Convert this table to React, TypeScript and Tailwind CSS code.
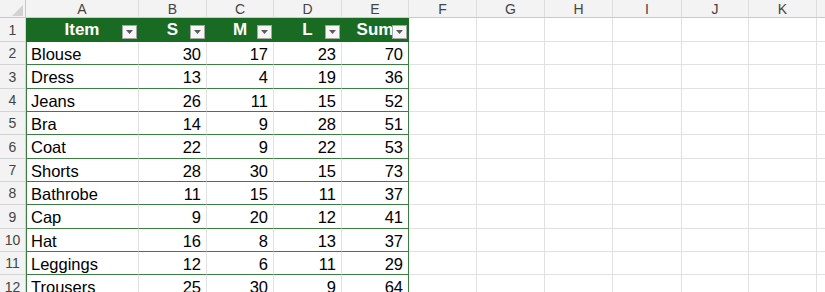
import React from 'react';

interface Column {
  letter: string;
  width: string;
}

const columns: Column[] = [
  { letter: 'A', width: 'w-[113px]' },
  { letter: 'B', width: 'w-[68px]' },
  { letter: 'C', width: 'w-[67px]' },
  { letter: 'D', width: 'w-[68px]' },
  { letter: 'E', width: 'w-[67px]' },
  { letter: 'F', width: 'w-[68px]' },
  { letter: 'G', width: 'w-[68px]' },
  { letter: 'H', width: 'w-[68px]' },
  { letter: 'I', width: 'w-[69px]' },
  { letter: 'J', width: 'w-[67px]' },
  { letter: 'K', width: 'w-[68px]' },
  { letter: 'L', width: 'w-[68px]' },
];

// heights of rows 2..12 (row 1 is the table header)
const rowHeights = [
  'h-[23px]', 'h-[24px]', 'h-[23px]', 'h-[23px]', 'h-[24px]', 'h-[23px]',
  'h-[23px]', 'h-[24px]', 'h-[23px]', 'h-[23px]', 'h-[24px]',
];

const headers = ['Item', 'S', 'M', 'L', 'Sum'];

const data: [string, number, number, number, number][] = [
  ['Blouse', 30, 17, 23, 70],
  ['Dress', 13, 4, 19, 36],
  ['Jeans', 26, 11, 15, 52],
  ['Bra', 14, 9, 28, 51],
  ['Coat', 22, 9, 22, 53],
  ['Shorts', 28, 30, 15, 73],
  ['Bathrobe', 11, 15, 11, 37],
  ['Cap', 9, 20, 12, 41],
  ['Hat', 16, 8, 13, 37],
  ['Leggings', 12, 6, 11, 29],
  ['Trousers', 25, 30, 9, 64],
];

function FilterButton() {
  return (
    <span className="absolute right-[1px] bottom-[2px] flex h-[14px] w-[15px] items-center justify-center border border-[#a6a6a6] bg-[#f6f6f6]">
      <svg width="7" height="4" viewBox="0 0 7 4">
        <path d="M0 0 H7 L3.5 4 Z" fill="#5a5a5a" />
      </svg>
    </span>
  );
}

function RowHeader({ n, height }: { n: number; height: string }) {
  return (
    <div className={`${height} w-[26px] shrink-0 flex items-center justify-center pt-[1px] border-r border-b border-[#d4d4d4] bg-[#f3f3f3] text-[14px] text-[#444]`}>
      {n}
    </div>
  );
}

export default function App() {
  return (
    <div className="h-[292px] w-[825px] overflow-hidden bg-white font-['Liberation_Sans',Arial,sans-serif]">
      {/* column letters */}
      <div className="flex h-[18px]">
        <div className="relative w-[26px] shrink-0 border-r border-b border-[#c8c8c8] bg-[#f3f3f3]">
          <svg className="absolute left-[12px] top-[5px]" width="11" height="11" viewBox="0 0 11 11">
            <path d="M11 0 V11 H0 Z" fill="#d2d2d2" />
          </svg>
        </div>
        {columns.map((c) => (
          <div
            key={c.letter}
            className={`${c.width} shrink-0 flex items-center justify-center pt-[1px] border-r border-b border-r-[#dcdcdc] border-b-[#c8c8c8] bg-[#f3f3f3] text-[14px] text-[#444]`}
          >
            {c.letter}
          </div>
        ))}
      </div>

      {/* row 1: table header */}
      <div className="flex">
        <RowHeader n={1} height="h-[24px]" />
        {columns.map((c, i) =>
          i < 5 ? (
            <div
              key={c.letter}
              className={`${c.width} relative shrink-0 flex h-[24px] items-center justify-center pt-[1px] border-r border-b border-[#196b24] bg-[#196b24] text-[17px] font-bold text-white`}
            >
              {headers[i]}
              <FilterButton />
            </div>
          ) : (
            <div key={c.letter} className={`${c.width} h-[24px] shrink-0 border-r border-b border-[#e1e1e1]`} />
          )
        )}
      </div>

      {/* data rows */}
      {data.map((row, r) => (
        <div key={row[0]} className="flex">
          <RowHeader n={r + 2} height={rowHeights[r]} />
          {columns.map((c, i) => {
            if (i >= 5) {
              return <div key={c.letter} className={`${c.width} ${rowHeights[r]} shrink-0 border-r border-b border-[#e1e1e1]`} />;
            }
            const first = i === 0;
            const last = i === 4;
            return (
              <div
                key={c.letter}
                className={`${c.width} ${rowHeights[r]} shrink-0 flex items-center pt-[2px] border-b border-r border-b-[#3a7f41] text-[16.5px] text-black ${
                  last ? 'border-r-[#3a7f41]' : 'border-r-[#e1e1e1]'
                } ${first ? 'justify-start pl-[5px] shadow-[inset_1px_0_0_#3a7f41]' : 'justify-end pr-[5px]'}`}
              >
                {row[i]}
              </div>
            );
          })}
        </div>
      ))}
    </div>
  );
}
